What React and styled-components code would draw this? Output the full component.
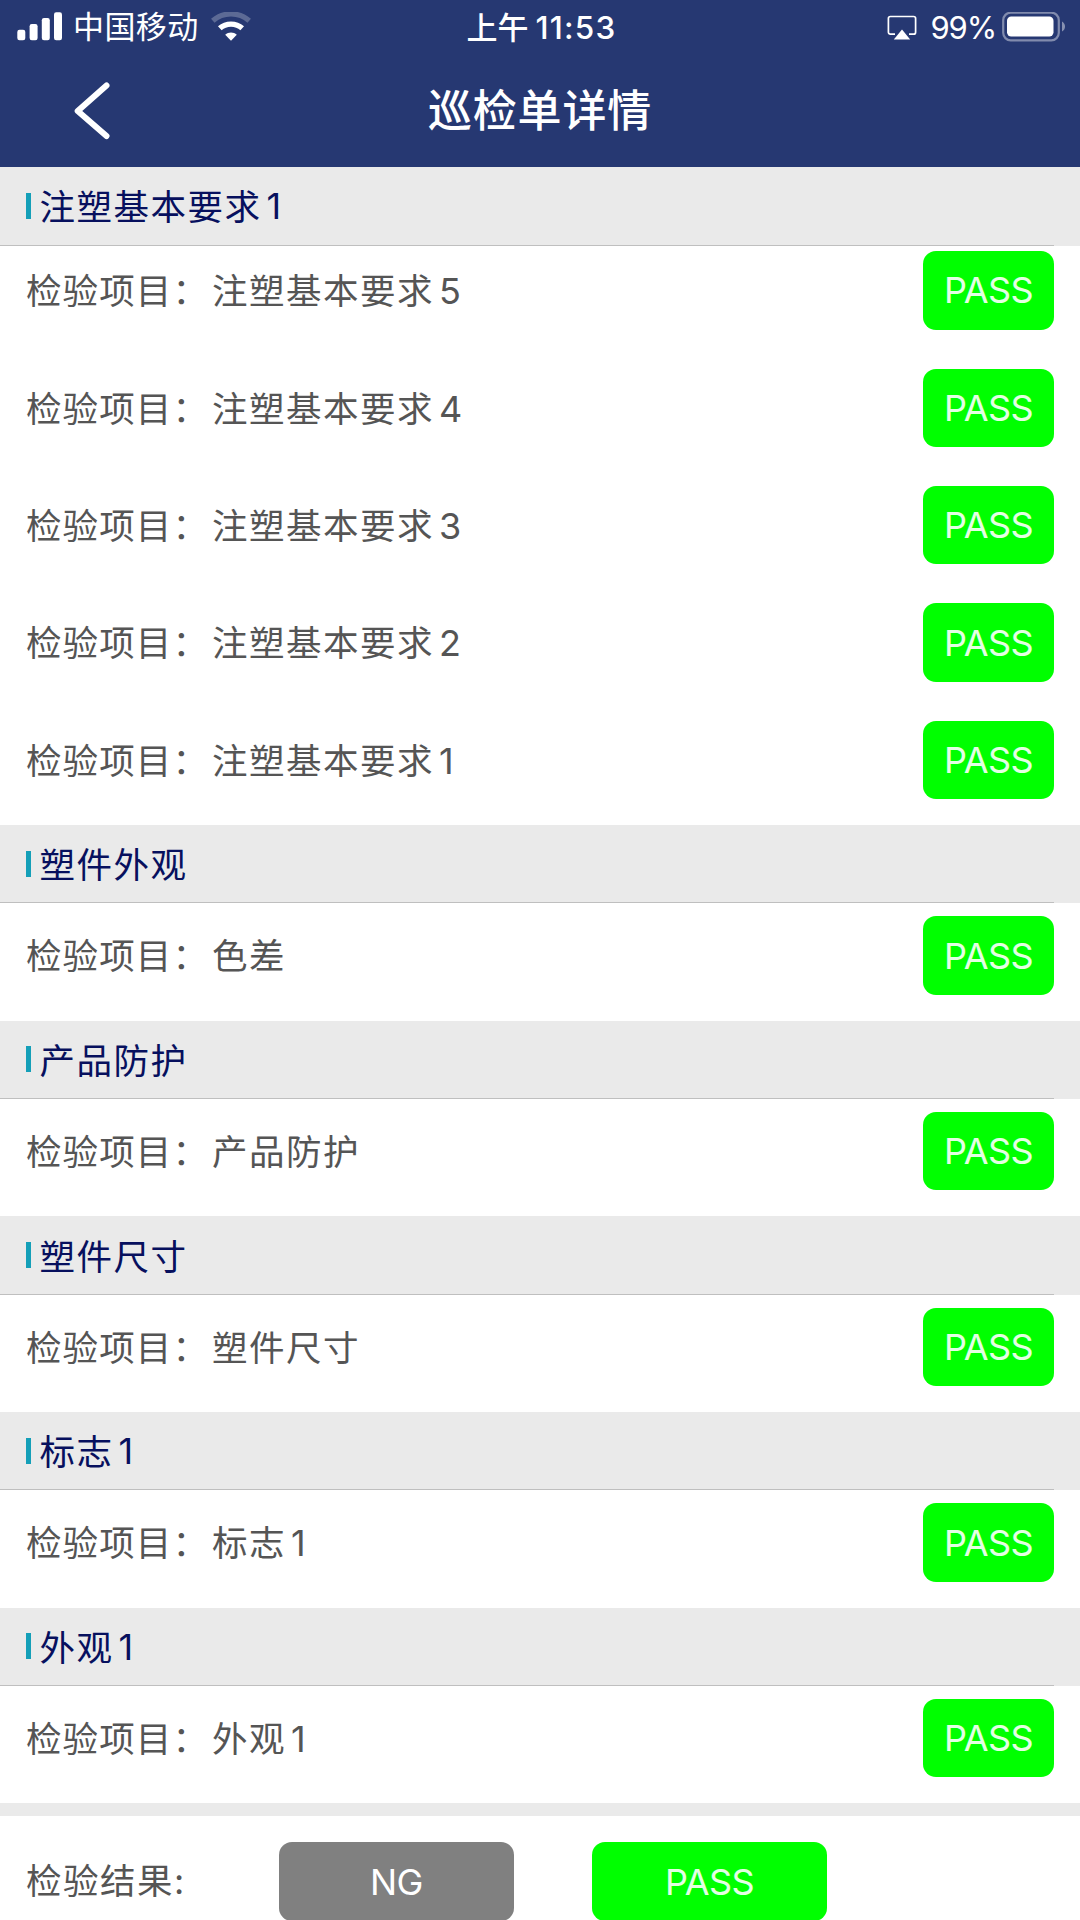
import styled, { createGlobalStyle } from "styled-components";

const GlobalStyle = createGlobalStyle`
  * {
    box-sizing: border-box;
  }

  body {
    margin: 0;
    background-color: #fff;
    font-family: Inter, "Noto Sans CJK SC", sans-serif;
  }
`;

const Page = styled.div`
  width: 1080px;
  height: 1920px;
  overflow: hidden;
  display: flex;
  flex-direction: column;
  background-color: #fff;
`;

const Header = styled.header`
  flex: none;
  height: 167.3px;
  background-color: #263872;
  color: #fff;
`;

const StatusBar = styled.div`
  display: grid;
  grid-template-columns: 1fr auto 1fr;
  align-items: center;
  height: 54px;
  padding: 0 14px 0 17px;
`;

const StatusGroup = styled.div`
  display: flex;
  align-items: center;
  justify-content: ${(props) => (props.$end ? "flex-end" : "flex-start")};
`;

const Carrier = styled.span`
  margin: 0 12px 0 10px;
  font-size: 31px;
  line-height: 54px;
  letter-spacing: 0.4px;
`;

const Clock = styled.div`
  display: flex;
  align-items: center;
  gap: 7px;
  padding-top: 1px;
  font-size: 31px;
  font-weight: 500;
  line-height: 53px;
`;

const ClockDigits = styled.span`
  font-size: 31.5px;
  letter-spacing: 1.2px;
`;

const BatteryText = styled.span`
  margin: 0 6px 0 13px;
  padding-top: 1px;
  font-size: 31px;
  line-height: 53px;
  letter-spacing: -1.1px;
`;

const NavBar = styled.div`
  display: grid;
  grid-template-columns: 180px 1fr 180px;
  align-items: center;
  height: 113px;
`;

const BackButton = styled.button`
  display: flex;
  align-items: center;
  height: 113px;
  padding: 0 0 0 72px;
  border: none;
  background: none;
  color: #fff;
`;

const Title = styled.h1`
  margin: 0;
  padding-top: 1px;
  font-size: 44px;
  font-weight: 500;
  line-height: 113px;
  letter-spacing: 0.8px;
  text-align: center;
`;

const Section = styled.section`
  flex: none;
`;

const SectionTitle = styled.div`
  position: relative;
  z-index: 1;
  display: flex;
  flex-direction: column;
  height: 78.25px;
  background-color: #eaeaea;
`;

const SectionName = styled.h2`
  flex: 1;
  display: flex;
  align-items: center;
  margin: 0 26px 0 0;
  padding: 0 0 2px 26px;
  border-bottom: 1.5px solid #bfbfbf;
  color: #07105e;
  font-size: 35.5px;
  font-weight: 400;
  letter-spacing: 1.5px;

  &::before {
    content: "";
    width: 5px;
    height: 26px;
    margin: 2px 8.5px 0 0;
    background-color: #149fb8;
  }
`;

const TitleDigit = styled.span`
  margin: 3px 0 0 5px;
  font-size: 36px;
`;

const ItemList = styled.div`
  margin-top: ${(props) => (props.$scrolled ? "-7.3px" : "0")};
`;

const Item = styled.div`
  display: flex;
  align-items: flex-start;
  justify-content: space-between;
  height: 117.4px;
  padding: 13px 26px 0;
`;

const ItemText = styled.div`
  display: flex;
  padding-top: 2px;
  color: #555;
  font-size: 35.5px;
  line-height: 77px;
  letter-spacing: 1.5px;
  white-space: nowrap;
`;

const ItemLabel = styled.span`
  width: 186px;
  letter-spacing: 1.1px;
`;

const ItemDigit = styled.span`
  margin-left: 5px;
  font-size: 36px;
`;

const ResultButton = styled.button`
  width: ${(props) => (props.$wide ? "235px" : "131px")};
  height: 78.25px;
  padding: 1px 0 0;
  border: none;
  border-radius: 13px;
  background-color: ${(props) => (props.$ng ? "#808080" : "#00ff00")};
  color: ${(props) => (props.$ng ? "#fff" : "#e4ffe4")};
  font-family: inherit;
  font-size: 36px;
  font-weight: 400;
  line-height: 77px;
  letter-spacing: -0.6px;
`;

const Footer = styled.footer`
  flex: none;
  display: flex;
  align-items: flex-start;
  border-top: 13px solid #eaeaea;
  padding: 26px 26px 0;
`;

const FooterLabel = styled(ItemText)`
  width: 253px;
  padding-top: 1px;
`;

const FooterButtons = styled.div`
  display: flex;
  gap: 78px;
`;

const sections = [
  {
    name: "注塑基本要求",
    number: 1,
    scrolled: true,
    items: [
      { name: "注塑基本要求", number: 5 },
      { name: "注塑基本要求", number: 4 },
      { name: "注塑基本要求", number: 3 },
      { name: "注塑基本要求", number: 2 },
      { name: "注塑基本要求", number: 1 },
    ],
  },
  { name: "塑件外观", items: [{ name: "色差" }] },
  { name: "产品防护", items: [{ name: "产品防护" }] },
  { name: "塑件尺寸", items: [{ name: "塑件尺寸" }] },
  { name: "标志", number: 1, items: [{ name: "标志", number: 1 }] },
  { name: "外观", number: 1, items: [{ name: "外观", number: 1 }] },
];

function SignalIcon() {
  return (
    <svg width="46" height="30" viewBox="0 0 46 30" fill="#fff">
      <rect x="0.3" y="17.7" width="8" height="10.5" rx="2.2" />
      <rect x="12.6" y="12" width="8" height="16.2" rx="2.2" />
      <rect x="24.8" y="6.1" width="8" height="22.1" rx="2.2" />
      <rect x="37" y="0.2" width="8" height="28" rx="2.2" />
    </svg>
  );
}

function WifiIcon() {
  return (
    <svg width="40" height="30" viewBox="0 0 40 30" fill="none">
      <path d="M1.8 8.8C12 -0.4 28 -0.4 38.2 8.8" stroke="#fff" strokeOpacity="0.25" strokeWidth="5.2" />
      <path d="M8.8 16.3C15 10.7 25 10.7 31.2 16.3" stroke="#fff" strokeWidth="5.4" />
      <path d="M20 28.7L14.2 22.8C17.5 19.7 22.5 19.7 25.8 22.8Z" fill="#fff" />
    </svg>
  );
}

function AirplayIcon() {
  return (
    <svg width="30" height="26" viewBox="0 0 30 26" fill="none">
      <path
        d="M8 20.2H3.4A2 2 0 0 1 1.4 18.2V4.5A2 2 0 0 1 3.4 2.5H26.6A2 2 0 0 1 28.6 4.5V18.2A2 2 0 0 1 26.6 20.2H22"
        stroke="#fff"
        strokeWidth="1.7"
      />
      <path d="M15 15.5L23.2 25.5H6.8Z" fill="#fff" />
    </svg>
  );
}

function BatteryIcon() {
  return (
    <svg width="64" height="30" viewBox="0 0 64 30" fill="none">
      <rect x="1.2" y="0.7" width="55.6" height="27.6" rx="7.5" stroke="#fff" strokeOpacity="0.42" strokeWidth="2.2" />
      <rect x="5" y="4.5" width="46.5" height="20" rx="4.2" fill="#fff" />
      <path d="M60 9.5C64 11.5 64 17.5 60 19.5Z" fill="#fff" fillOpacity="0.45" />
    </svg>
  );
}

function BackIcon() {
  return (
    <svg width="40" height="60" viewBox="0 0 40 60" fill="none">
      <path d="M34.5 4.5L5.7 30L34.5 55" stroke="#fff" strokeWidth="6" strokeLinecap="round" strokeLinejoin="round" />
    </svg>
  );
}

function App() {
  return (
    <Page>
      <GlobalStyle />
      <Header>
        <StatusBar>
          <StatusGroup>
            <SignalIcon />
            <Carrier>中国移动</Carrier>
            <WifiIcon />
          </StatusGroup>
          <Clock>
            上午<ClockDigits>11:53</ClockDigits>
          </Clock>
          <StatusGroup $end>
            <AirplayIcon />
            <BatteryText>99%</BatteryText>
            <BatteryIcon />
          </StatusGroup>
        </StatusBar>
        <NavBar>
          <BackButton aria-label="返回">
            <BackIcon />
          </BackButton>
          <Title>巡检单详情</Title>
        </NavBar>
      </Header>
      {sections.map((section) => (
        <Section key={section.name}>
          <SectionTitle>
            <SectionName>
              {section.name}
              {section.number && <TitleDigit>{section.number}</TitleDigit>}
            </SectionName>
          </SectionTitle>
          <ItemList $scrolled={section.scrolled}>
            {section.items.map((item) => (
              <Item key={item.name + (item.number || "")}>
                <ItemText>
                  <ItemLabel>检验项目：</ItemLabel>
                  {item.name}
                  {item.number && <ItemDigit>{item.number}</ItemDigit>}
                </ItemText>
                <ResultButton>PASS</ResultButton>
              </Item>
            ))}
          </ItemList>
        </Section>
      ))}
      <Footer>
        <FooterLabel>检验结果:</FooterLabel>
        <FooterButtons>
          <ResultButton $wide $ng>NG</ResultButton>
          <ResultButton $wide>PASS</ResultButton>
        </FooterButtons>
      </Footer>
    </Page>
  );
}

export default App;
